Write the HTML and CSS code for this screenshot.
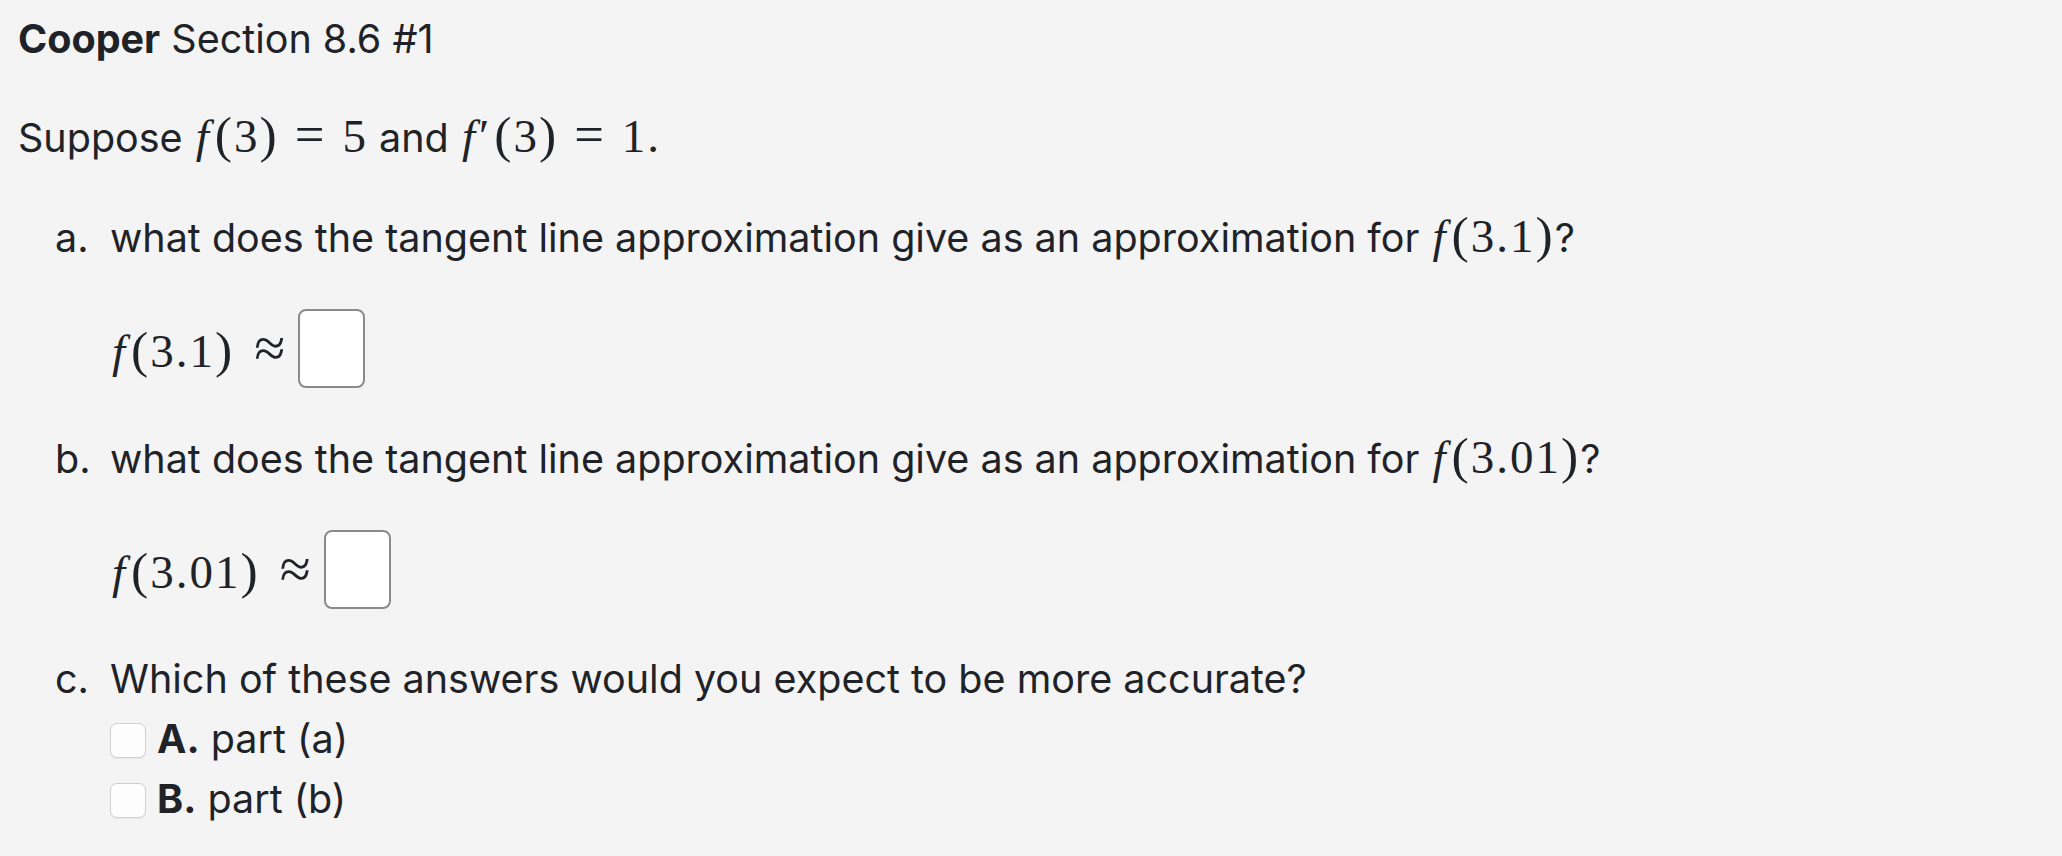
FILE: index.html
```html
<!DOCTYPE html>
<html>
<head>
<meta charset="utf-8">
<link rel="stylesheet" href="styles.css">
</head>
<body>
<div class="page">
  <h1 class="title"><strong>Cooper</strong> Section 8.6 #1</h1>
  <p class="intro">Suppose <span class="m"><i>f</i><span class="p">(</span>3<span class="p">)</span><span class="rel">=</span>5</span> and <span class="m"><i>f</i><span class="prime">′</span><span class="p">(</span>3<span class="p">)</span><span class="rel">=</span>1.</span></p>
  <ol class="parts">
    <li>
      <span class="mark">a.</span>
      <div class="body">
        <p class="q">what does the tangent line approximation give as an approximation for <span class="m"><i>f</i><span class="p">(</span>3.1<span class="p">)</span></span>?</p>
        <div class="display"><span class="m"><i>f</i><span class="p">(</span>3.1<span class="p">)</span><span class="approx">≈</span></span><span class="box"></span></div>
      </div>
    </li>
    <li>
      <span class="mark">b.</span>
      <div class="body">
        <p class="q">what does the tangent line approximation give as an approximation for <span class="m"><i>f</i><span class="p">(</span>3.01<span class="p">)</span></span>?</p>
        <div class="display"><span class="m"><i>f</i><span class="p">(</span>3.01<span class="p">)</span><span class="approx">≈</span></span><span class="box"></span></div>
      </div>
    </li>
    <li>
      <span class="mark">c.</span>
      <div class="body">
        <p class="q">Which of these answers would you expect to be more accurate?</p>
        <div class="options">
          <label class="opt"><span class="check"></span><span><b>A.</b> part (a)</span></label>
          <label class="opt"><span class="check"></span><span><b>B.</b> part (b)</span></label>
        </div>
      </div>
    </li>
  </ol>
</div>
</body>
</html>
```
FILE: styles.css
```css
html, body {
  margin: 0;
  padding: 0;
  background: #f4f4f4;
}
body {
  font-family: Inter, "Noto Sans", sans-serif;
  color: #1f2328;
  font-size: 39.5px;
  line-height: 52px;
}
.page {
  padding: 13px 18px;
}
.title {
  margin: 0;
  font-size: 39.5px;
  font-weight: 400;
  line-height: 52px;
}
.title strong { font-weight: 700; }
.intro {
  margin: 47px 0 0;
}
.m {
  font-family: "Liberation Serif", "Times New Roman", serif;
  font-size: 47px;
  letter-spacing: 2px;
  white-space: nowrap;
  line-height: 0;
}
.m i {
  font-style: italic;
  margin-left: 2px;
  margin-right: 4px;
}
.m .p {
  font-size: 1.1em;
}
.m .prime { margin-left: -2px; margin-right: 3px; }
.m .rel {
  font-size: 1.12em;
  margin: 0 16px;
}
.m .approx {
  font-size: 1.2em;
  margin-left: 20px;
}
.parts {
  list-style: none;
  margin: 48px 0 0;
  padding: 0 0 0 37px;
}
.parts li {
  display: grid;
  grid-template-columns: 55px 1fr;
}
.parts li + li { margin-top: 44.6px; }
.mark { line-height: 52px; }
.q {
  margin: 0;
}
.display {
  display: flex;
  align-items: center;
  gap: 11px;
  margin: 45px 0 0;
  height: 79px;
}
.display .m { line-height: 1; }
.box {
  display: block;
  width: 63px;
  height: 75px;
  border: 2px solid #8a8a8a;
  border-radius: 8px;
  background: #fff;
}
.options {
  display: flex;
  flex-direction: column;
  gap: 8px;
  margin-top: 8px;
}
.opt {
  display: flex;
  align-items: center;
  gap: 11px;
}
.opt b { font-weight: 700; }
.check {
  display: block;
  width: 34px;
  height: 33px;
  margin-top: 3px;
  border: 1px solid #cfcfcf;
  border-radius: 7px;
  background: #fdfdfd;
  box-shadow: 0 1px 1px rgba(0,0,0,0.05);
}
```
